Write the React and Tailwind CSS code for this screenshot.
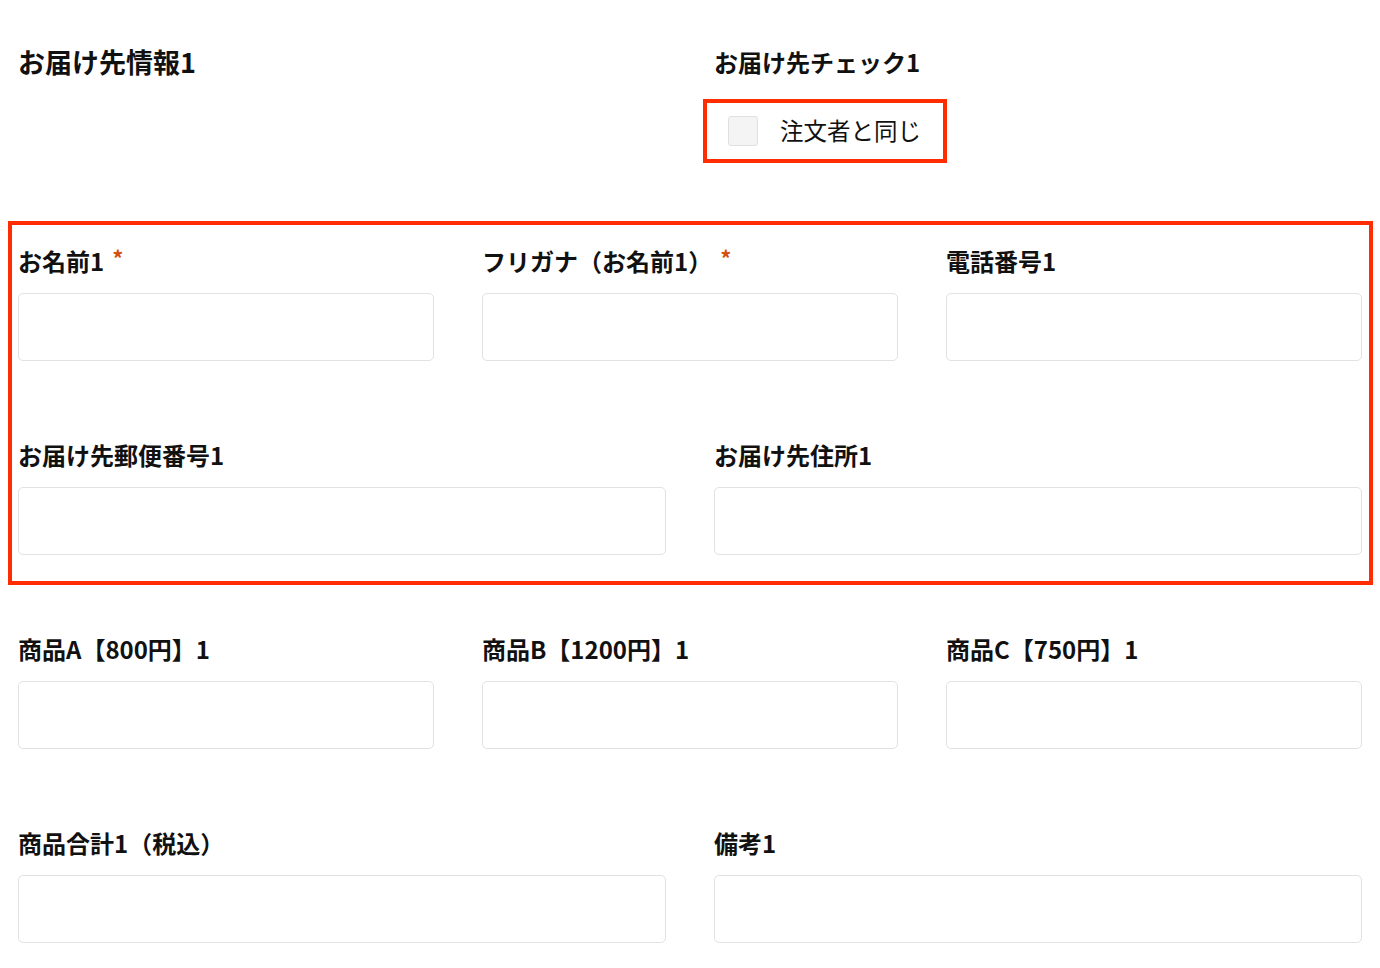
const font = { fontFamily: '"Noto Sans CJK JP", "Noto Sans", sans-serif' };

const Field = ({ label, required }) => (
  <div className="flex flex-col">
    <div className="flex h-[36px] items-center text-[24px] font-bold leading-[36px] text-[#111]">
      <span>{label}</span>
      {required && <span className="ml-[8px] -mt-[8px] text-[22px] text-[#d4500f]">*</span>}
    </div>
    <input className="mt-[14px] h-[68px] w-full rounded-[5px] border border-[#e2e2e2] bg-white px-3 outline-none" />
  </div>
);

export default function App() {
  return (
    <div className="min-h-[968px] bg-white px-[18px] pt-[44px]" style={font}>
      <div className="grid grid-cols-2 gap-x-[48px]">
        <h2 className="h-[36px] text-[27px] font-bold leading-[36px] text-[#111]">お届け先情報1</h2>
        <div className="flex flex-col items-start">
          <h3 className="h-[36px] text-[24px] font-bold leading-[36px] text-[#111]">お届け先チェック1</h3>
          <div className="-ml-[11px] mt-[19px] flex h-[64px] w-[244px] items-center border-[4px] border-[#ff2d00] pl-[21px]">
            <span className="h-[30px] w-[30px] rounded-[3px] border border-[#e0e0e0] bg-[#f4f4f4]" />
            <span className="ml-[22px] text-[23.5px] leading-none text-[#111]">注文者と同じ</span>
          </div>
        </div>
      </div>

      <div className="-ml-[10px] -mr-[11px] mt-[58px] border-[4px] border-[#ff2d00] pb-[26px] pl-[6px] pr-[7px] pt-[18px]">
        <div className="grid grid-cols-3 gap-x-[48px]">
          <Field label="お名前1" required />
          <Field label="フリガナ（お名前1）" required />
          <Field label="電話番号1" />
        </div>
        <div className="mt-[76px] grid grid-cols-2 gap-x-[48px]">
          <Field label="お届け先郵便番号1" />
          <Field label="お届け先住所1" />
        </div>
      </div>

      <div className="mt-[46px] grid grid-cols-3 gap-x-[48px]">
        <Field label="商品A【800円】1" />
        <Field label="商品B【1200円】1" />
        <Field label="商品C【750円】1" />
      </div>
      <div className="mt-[76px] grid grid-cols-2 gap-x-[48px]">
        <Field label="商品合計1（税込）" />
        <Field label="備考1" />
      </div>
    </div>
  );
}
